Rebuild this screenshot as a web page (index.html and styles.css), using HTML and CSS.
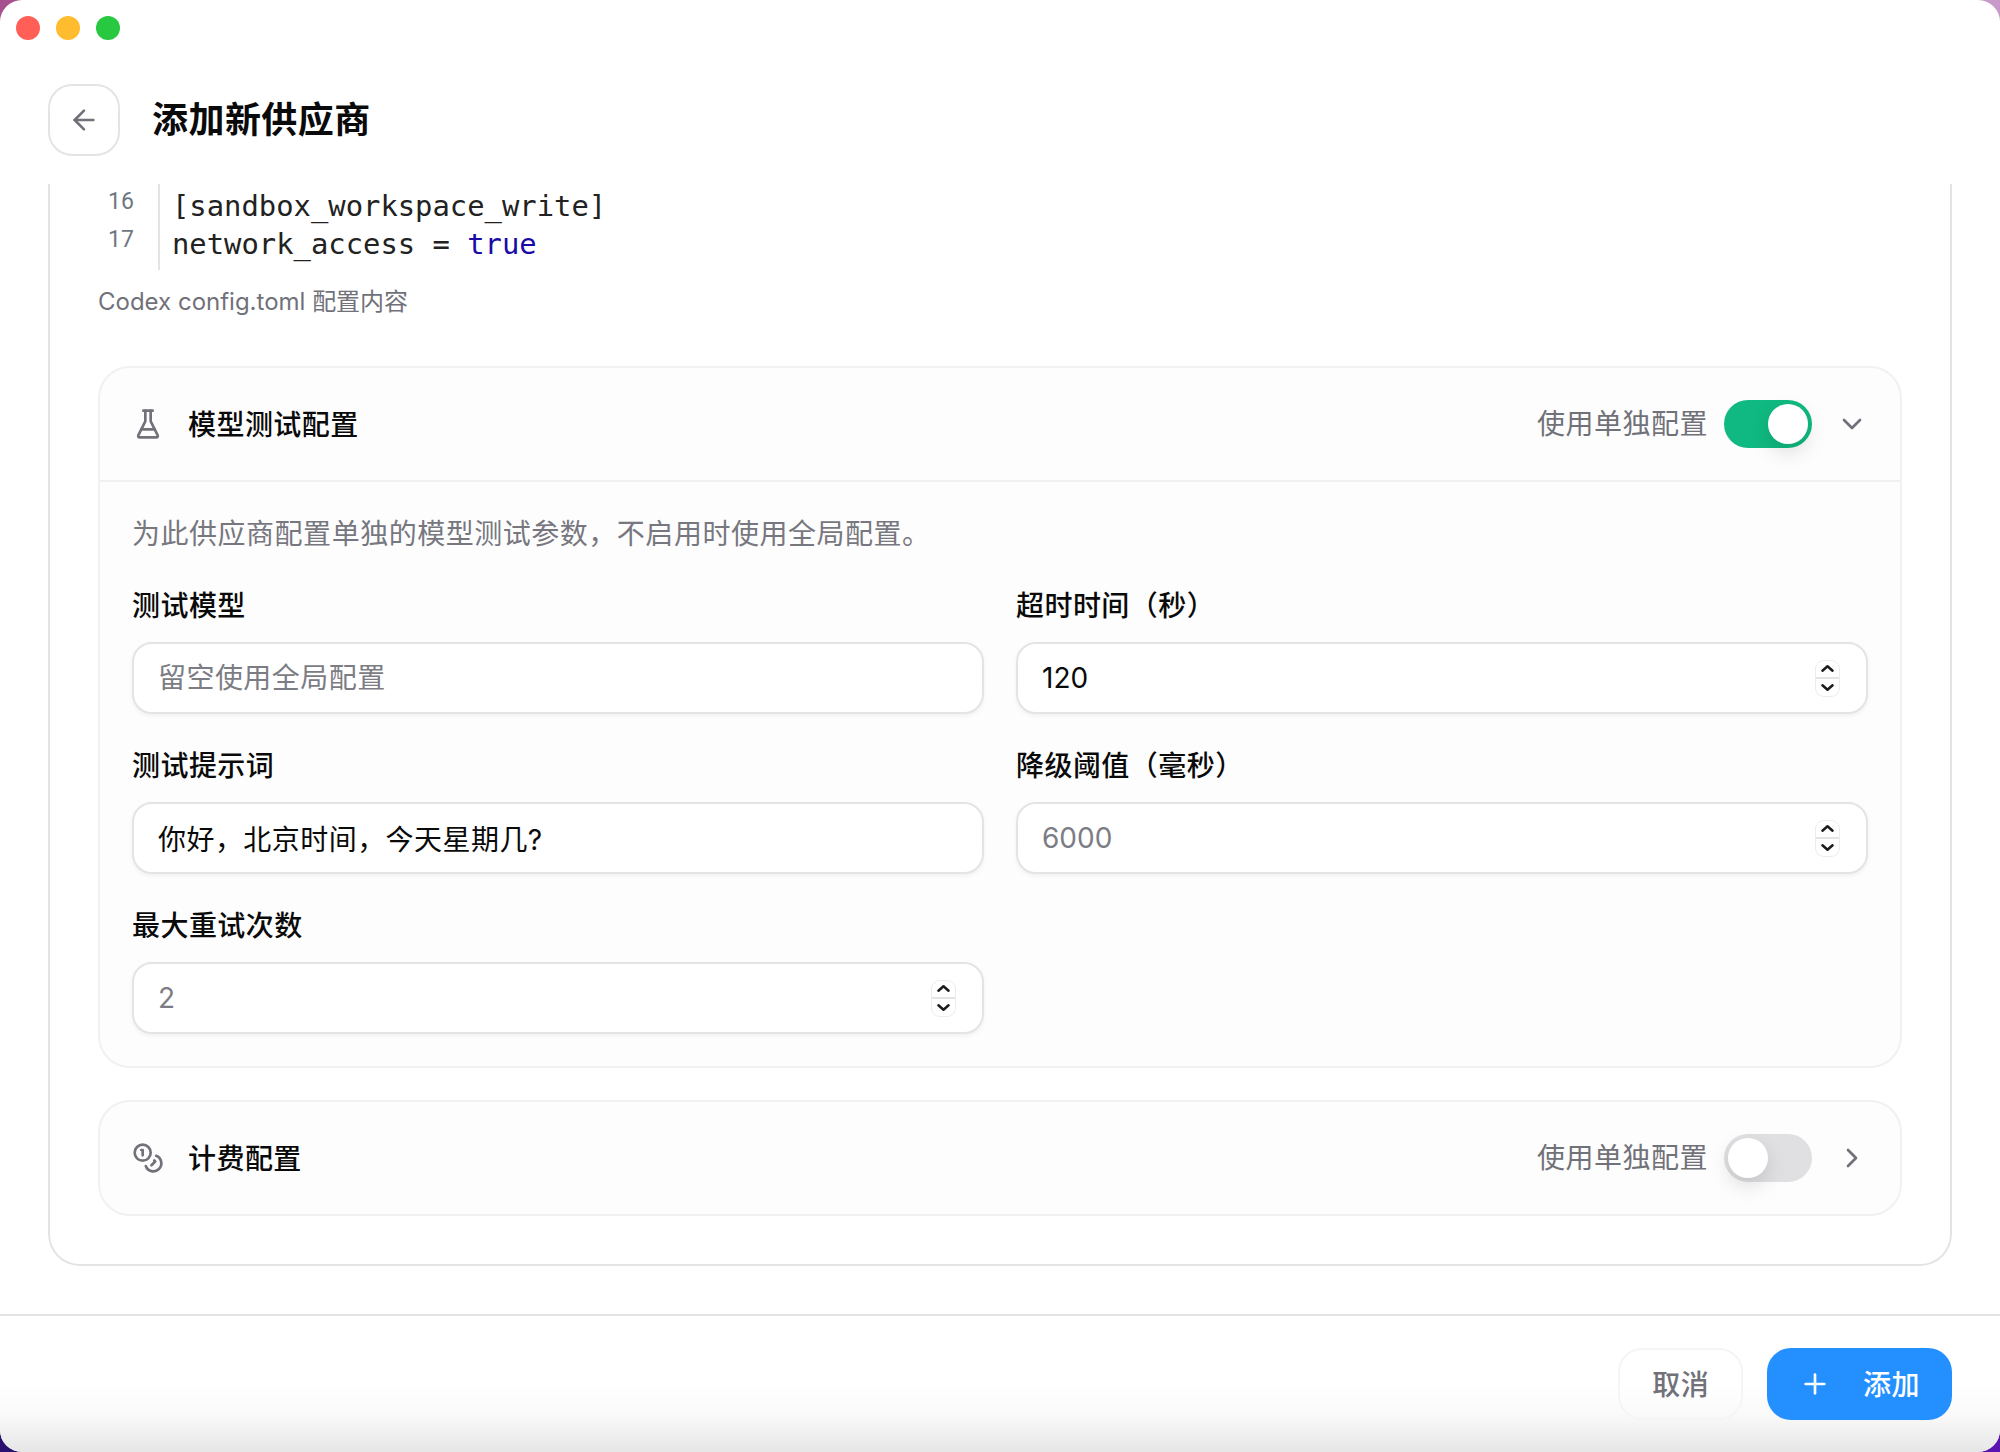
FILE: index.html
```html
<!DOCTYPE html>
<html>
<head>
    <title>添加新供应商</title>
    <link rel="stylesheet" href="styles.css">
</head>
<body>
    <div class="window">
        <div class="titlebar">
            <span class="dot dot-red"></span>
            <span class="dot dot-yellow"></span>
            <span class="dot dot-green"></span>
        </div>

        <div class="page-header">
            <button class="back-btn">
                <svg class="icon" viewBox="0 0 24 24"><path d="m12 19-7-7 7-7"/><path d="M19 12H5"/></svg>
            </button>
            <h1>添加新供应商</h1>
        </div>

        <div class="content">
            <div class="form-card">
                <div class="code-block">
                    <div class="gutter">
                        <div>16</div>
                        <div>17</div>
                    </div>
                    <div class="code">
                        <div>[sandbox_workspace_write]</div>
                        <div>network_access = <span class="kw">true</span></div>
                    </div>
                </div>
                <p class="hint">Codex config.toml 配置内容</p>

                <div class="section">
                    <div class="section-header section-header-open">
                        <svg class="icon" viewBox="0 0 24 24"><path d="M10 2v7.527a2 2 0 0 1-.211.896L4.72 20.55a1 1 0 0 0 .9 1.45h12.76a1 1 0 0 0 .9-1.45l-5.069-10.127A2 2 0 0 1 14 9.527V2"/><path d="M8.5 2h7"/><path d="M7 16h10"/></svg>
                        <span class="section-title">模型测试配置</span>
                        <span class="toggle-label">使用单独配置</span>
                        <span class="toggle toggle-on"><span class="knob"></span></span>
                        <svg class="icon" viewBox="0 0 24 24"><path d="m6 9 6 6 6-6"/></svg>
                    </div>
                    <div class="section-body">
                        <p class="desc">为此供应商配置单独的模型测试参数，不启用时使用全局配置。</p>
                        <div class="field-grid">
                            <div class="field">
                                <label>测试模型</label>
                                <div class="input-box"><input class="cjk" type="text" placeholder="留空使用全局配置"></div>
                            </div>
                            <div class="field">
                                <label>超时时间（秒）</label>
                                <div class="input-box">
                                    <input type="text" value="120">
                                    <span class="stepper">
                                        <span class="step"><svg viewBox="0 0 12 8"><path d="M1.500 6 6 2l4.500 4"/></svg></span>
                                        <span class="step"><svg viewBox="0 0 12 8"><path d="M1.500 2 6 6l4.500-4"/></svg></span>
                                    </span>
                                </div>
                            </div>
                            <div class="field">
                                <label>测试提示词</label>
                                <div class="input-box"><input class="cjk" type="text" value="你好，北京时间，今天星期几?"></div>
                            </div>
                            <div class="field">
                                <label>降级阈值（毫秒）</label>
                                <div class="input-box">
                                    <input type="text" placeholder="6000">
                                    <span class="stepper">
                                        <span class="step"><svg viewBox="0 0 12 8"><path d="M1.500 6 6 2l4.500 4"/></svg></span>
                                        <span class="step"><svg viewBox="0 0 12 8"><path d="M1.500 2 6 6l4.500-4"/></svg></span>
                                    </span>
                                </div>
                            </div>
                            <div class="field">
                                <label>最大重试次数</label>
                                <div class="input-box">
                                    <input type="text" placeholder="2">
                                    <span class="stepper">
                                        <span class="step"><svg viewBox="0 0 12 8"><path d="M1.500 6 6 2l4.500 4"/></svg></span>
                                        <span class="step"><svg viewBox="0 0 12 8"><path d="M1.500 2 6 6l4.500-4"/></svg></span>
                                    </span>
                                </div>
                            </div>
                        </div>
                    </div>
                </div>

                <div class="section">
                    <div class="section-header">
                        <svg class="icon" viewBox="0 0 24 24"><circle cx="8" cy="8" r="6"/><path d="M18.09 10.37A6 6 0 1 1 10.34 18"/><path d="M7 6h1v4"/><path d="m16.71 13.88.7.71-2.82 2.82"/></svg>
                        <span class="section-title">计费配置</span>
                        <span class="toggle-label">使用单独配置</span>
                        <span class="toggle"><span class="knob"></span></span>
                        <svg class="icon" viewBox="0 0 24 24"><path d="m9 18 6-6-6-6"/></svg>
                    </div>
                </div>
            </div>
        </div>

        <div class="footer">
            <button class="btn btn-cancel"><span class="btn-text">取消</span></button>
            <button class="btn btn-add">
                <svg class="icon" viewBox="0 0 24 24"><path d="M5 12h14"/><path d="M12 5v14"/></svg>
                <span class="btn-text">添加</span>
            </button>
        </div>
    </div>
</body>
</html>
```

FILE: styles.css
```css
* { box-sizing: border-box; }

html, body { margin: 0; height: 100%; }

body {
    width: 2000px;
    height: 1452px;
    overflow: hidden;
    background:
        radial-gradient(circle at 0 0, #a84f90 0, #a84f90 40px, transparent 41px),
        radial-gradient(circle at 100% 0, #c79ac9 0, #c79ac9 40px, transparent 41px),
        radial-gradient(circle at 0 100%, #2a1070 0, #2a1070 40px, transparent 41px),
        radial-gradient(circle at 100% 100%, #5a14b0 0, #5a14b0 40px, transparent 41px);
    font-family: Inter, "Noto Sans CJK SC", sans-serif;
    color: #0a0a0a;
}

.window {
    width: 2000px;
    height: 1452px;
    display: flex;
    flex-direction: column;
    background: #fff;
    border-radius: 22px;
    overflow: hidden;
}

.titlebar {
    height: 56px;
    flex: none;
    display: flex;
    align-items: center;
    gap: 16px;
    padding-left: 16px;
}
.dot { width: 24px; height: 24px; border-radius: 50%; }
.dot-red { background: #ff5f57; }
.dot-yellow { background: #febc2e; }
.dot-green { background: #28c840; }

.icon {
    width: 32px;
    height: 32px;
    flex: none;
    fill: none;
    stroke: #71717a;
    stroke-width: 2;
    stroke-linecap: round;
    stroke-linejoin: round;
}

.page-header {
    height: 128px;
    flex: none;
    display: flex;
    align-items: flex-start;
    gap: 32px;
    padding: 28px 48px 0;
}
.back-btn {
    width: 72px;
    height: 72px;
    display: flex;
    align-items: center;
    justify-content: center;
    padding: 0;
    background: #fff;
    border: 2px solid #e4e4e7;
    border-radius: 24px;
}
h1 {
    margin: 0;
    font-size: 36px;
    line-height: 72px;
    font-weight: 600;
    letter-spacing: 0.45px;
}

.content {
    flex: 1;
    min-height: 0;
    padding: 0 48px 48px;
    overflow: hidden;
}
.form-card {
    border: 2px solid #e4e4e7;
    border-top: none;
    border-radius: 0 0 32px 32px;
    padding: 0 48px 48px;
}

.code-block { display: flex; height: 86px; }
.gutter {
    width: 62px;
    padding: 0 0 0 10px;
    border-right: 2px solid #e4e4e7;
    font-family: Roboto, sans-serif;
    font-size: 23px;
    line-height: 38px;
    color: #6e7781;
}
.gutter div { transform: translateY(-1px); }
.code {
    padding: 3px 0 0 12px;
    font-family: "DejaVu Sans Mono", monospace;
    font-size: 28.85px;
    line-height: 38px;
    color: #222;
}
.kw { color: #1a0aa6; }

.hint {
    margin: 16px 0 48px;
    font-size: 24px;
    line-height: 32px;
    color: #71717a;
}

.section {
    border: 2px solid #f1f1f2;
    border-radius: 32px;
    background: #fdfdfd;
}
.section + .section { margin-top: 32px; }
.section-header {
    display: flex;
    align-items: center;
    gap: 24px;
    padding: 32px;
}
.section-header-open { border-bottom: 2px solid #f1f1f2; }
.section-title {
    flex: 1;
    padding-bottom: 2px;
    font-size: 28px;
    font-weight: 500;
    letter-spacing: 0.45px;
}
.toggle-label {
    margin-right: -8px;
    padding-bottom: 4px;
    font-size: 28px;
    letter-spacing: 0.5px;
    color: #71717a;
}

.toggle {
    width: 88px;
    height: 48px;
    flex: none;
    display: flex;
    padding: 4px;
    border-radius: 24px;
    background: #e0e0e3;
}
.toggle-on { background: #10b981; justify-content: flex-end; }
.knob {
    width: 40px;
    height: 40px;
    border-radius: 50%;
    background: #fff;
    box-shadow: 0 8px 20px rgba(0, 0, 0, 0.13);
}

.section-body { padding: 32px; }
.desc {
    margin: 0 0 32px;
    font-size: 28px;
    line-height: 40px;
    letter-spacing: 0.52px;
    color: #77777f;
}
.field-grid {
    display: grid;
    grid-template-columns: 1fr 1fr;
    gap: 32px;
}
.field label {
    display: block;
    margin-bottom: 16px;
    font-size: 28px;
    line-height: 40px;
    font-weight: 500;
    letter-spacing: 0.45px;
}
.input-box {
    height: 72px;
    display: flex;
    align-items: center;
    padding: 0 24px;
    background: #fff;
    border: 2px solid #e4e4e7;
    border-radius: 20px;
    box-shadow: 0 2px 4px rgba(0, 0, 0, 0.05);
}
.input-box input {
    flex: 1;
    min-width: 0;
    height: 100%;
    padding: 0;
    border: none;
    outline: none;
    background: transparent;
    font-family: inherit;
    font-size: 28px;
    color: #0a0a0a;
}
.input-box input.cjk { letter-spacing: 0.45px; }
.input-box input::placeholder { color: #7c7c84; opacity: 1; }

.stepper {
    width: 23px;
    height: 35px;
    flex: none;
    margin-right: 3px;
    display: flex;
    flex-direction: column;
    background: #fff;
    border-radius: 8px;
    box-shadow: 0 0 0 1px #ececee;
}
.step { flex: 1; display: flex; align-items: center; justify-content: center; }
.step + .step { border-top: 2px solid #e4e4e7; }
.step svg {
    width: 15px;
    height: 9px;
    fill: none;
    stroke: #1c1c1e;
    stroke-width: 2.2;
    stroke-linecap: round;
    stroke-linejoin: round;
}

.footer {
    height: 138px;
    flex: none;
    display: flex;
    justify-content: flex-end;
    align-items: flex-start;
    gap: 24px;
    padding: 32px 48px 0;
    border-top: 2px solid #e4e4e7;
    background: linear-gradient(to bottom, #fff 50%, #fafafa 72%, #e6e6e6 100%);
}
.btn {
    height: 72px;
    display: flex;
    align-items: center;
    border-radius: 24px;
    font-family: inherit;
    font-size: 28px;
    font-weight: 500;
    letter-spacing: 0.45px;
}
.btn-text { margin-bottom: 2px; }
.btn-cancel {
    padding: 0 32px;
    background: transparent;
    border: 2px solid #f5f5f5;
    color: #71717a;
}
.btn-add {
    gap: 32px;
    padding: 0 32px;
    background: #2490ff;
    border: none;
    color: #fff;
}
.btn-add .icon { stroke: #fff; }
```
